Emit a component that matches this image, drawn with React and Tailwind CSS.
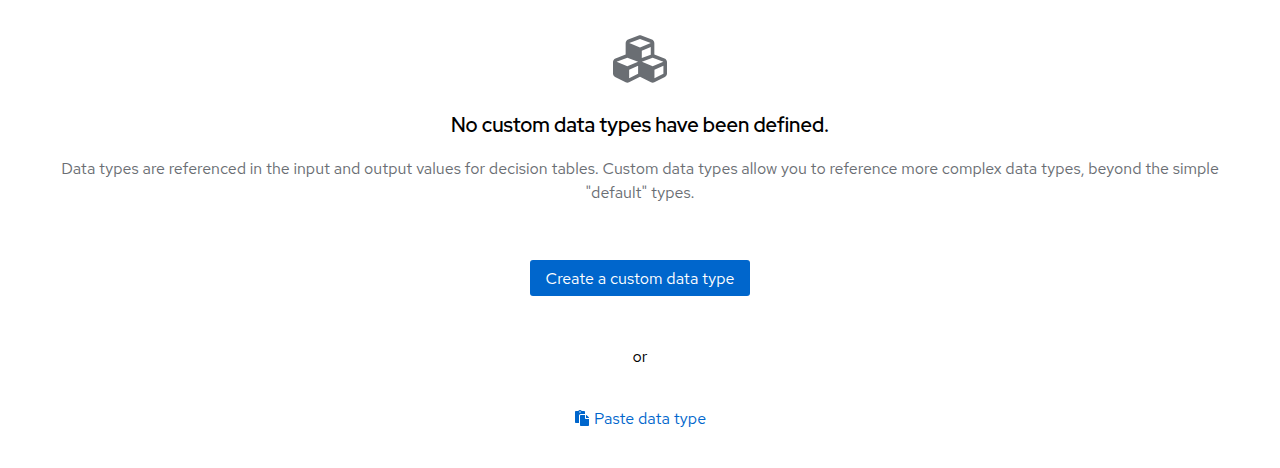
import React from "react";
import { FaCubes, FaPaste } from "react-icons/fa";

export default function App() {
  return (
    <main className="flex h-[468px] flex-col items-center bg-white font-['Red_Hat_Text','Lato',sans-serif] text-base leading-6 text-black">
      <FaCubes className="mt-8 size-[54px] text-[#6a6e73]" />
      <h1 className="mt-6 font-['Red_Hat_Display','Red_Hat_Text','Lato',sans-serif] text-xl font-[570] leading-[30px] whitespace-nowrap">No custom data types have been defined.</h1>
      <div className="mt-[17px] flex flex-col items-center text-[#6a6e73] whitespace-nowrap">
        <p>Data types are referenced in the input and output values for decision tables. Custom data types allow you to reference more complex data types, beyond the simple</p>
        <p>"default" types.</p>
      </div>
      <button className="mt-[55px] flex h-9 items-center justify-center rounded-[3px] bg-[#0066cc] px-4 pt-0.5 text-white whitespace-nowrap">Create a custom data type</button>
      <p className="mt-[49px]">or</p>
      <button className="mt-[38px] flex items-center gap-1 text-[#0066cc]">
        <FaPaste className="mb-0.5 size-4" />
        <span>Paste data type</span>
      </button>
    </main>
  );
}
